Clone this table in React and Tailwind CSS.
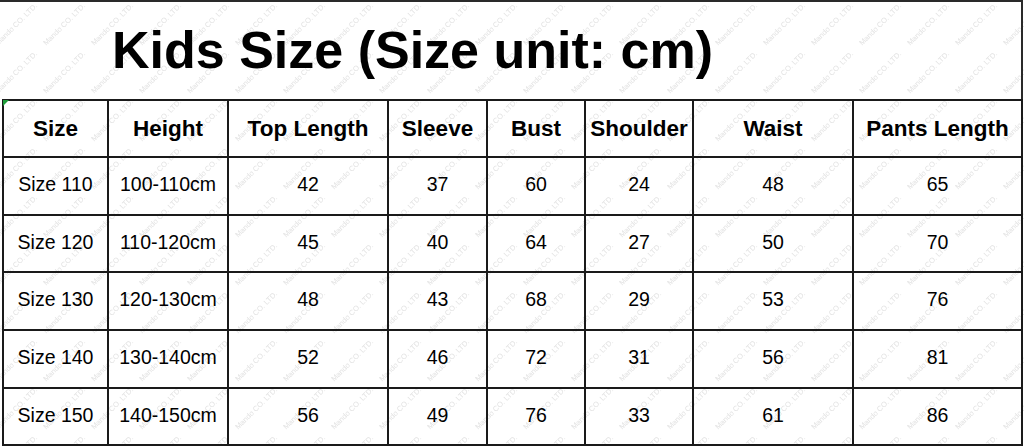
import React from "react";

const headers = ["Size", "Height", "Top Length", "Sleeve", "Bust", "Shoulder", "Waist", "Pants Length"];

const rows = [
  ["Size 110", "100-110cm", "42", "37", "60", "24", "48", "65"],
  ["Size 120", "110-120cm", "45", "40", "64", "27", "50", "70"],
  ["Size 130", "120-130cm", "48", "43", "68", "29", "53", "76"],
  ["Size 140", "130-140cm", "52", "46", "72", "31", "56", "81"],
  ["Size 150", "140-150cm", "56", "49", "76", "33", "61", "86"],
];

const rowHeights = ["h-[58px]", "h-[57px]", "h-[58px]", "h-[58px]", "h-[57px]"];

// faint diagonal watermark, tiled as a drawing behind the sheet
const Watermark = () => (
  <svg className="absolute inset-0 pointer-events-none" width="1024" height="446" aria-hidden="true">
    <defs>
      <pattern id="wm" width="48" height="48" patternUnits="userSpaceOnUse" x="-6" y="2">
        <text
          x="24"
          y="24"
          fontSize="7.5"
          fill="#e2e2e2"
          textAnchor="middle"
          transform="rotate(-45 24 24)"
          fontFamily="Liberation Sans, Arial, sans-serif"
        >
          Mando CO. LTD.
        </text>
      </pattern>
    </defs>
    <rect width="1024" height="446" fill="url(#wm)" />
  </svg>
);

export default function App() {
  return (
    <div
      className="relative w-[1024px] h-[446px] bg-white overflow-hidden text-black"
      style={{ fontFamily: '"Liberation Sans", Arial, sans-serif' }}
    >
      <Watermark />

      <div className="relative z-10 flex flex-col">
        {/* Title */}
        <div className="h-[99px] border-t-2 border-[#2a2a2a] mr-[1px] border-r-2 flex items-center">
          <h1 className="ml-[112px] -mt-[2px] text-[52px] font-bold leading-none">
            Kids Size (Size unit: cm)
          </h1>
        </div>

        {/* Table */}
        <div className="relative ml-[2px] w-[1021px] border-l-2 border-t-2 border-[#1a1a1a]">
          <div className="absolute -left-[1px] -top-[1px] w-0 h-0 border-t-[6px] border-r-[6px] border-t-[#1f9d3a] border-r-transparent" />
          <div className="grid grid-cols-[105px_120px_160px_99px_98px_108px_160px_169px]">
            {headers.map((h) => (
              <div
                key={h}
                className="h-[57px] border-r-2 border-b-2 border-[#1a1a1a] flex items-center justify-center text-[22.5px] font-bold whitespace-nowrap"
              >
                {h}
              </div>
            ))}
            {rows.map((row, i) =>
              row.map((cell, j) => (
                <div
                  key={`${i}-${j}`}
                  className={`${rowHeights[i]} border-r-2 border-b-2 border-[#1a1a1a] flex items-center justify-center text-[19.5px] whitespace-nowrap pb-[2px]`}
                >
                  {cell}
                </div>
              ))
            )}
          </div>
        </div>
      </div>
    </div>
  );
}
